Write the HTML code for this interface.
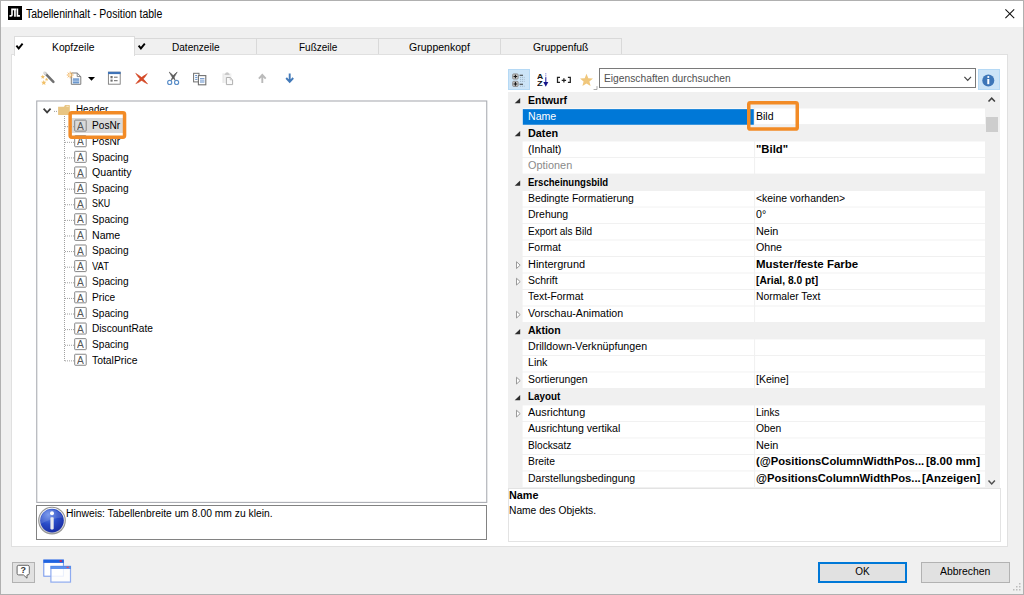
<!DOCTYPE html>
<html lang="de"><head><meta charset="utf-8"><title>Tabelleninhalt - Position table</title>
<style>
html,body{margin:0;padding:0;}
body{width:1024px;height:595px;overflow:hidden;background:#f0f0f0;font-family:"Liberation Sans",sans-serif;font-size:10.5px;position:relative;}
.abs,.t,.ic{position:absolute;}
.t{white-space:pre;line-height:normal;transform-origin:0 0;}
#win{position:absolute;left:0;top:0;width:1022px;height:593px;border:1px solid #b0b0b0;}
#title{left:1px;top:1px;width:1022px;height:26px;background:#fff;}
#logo{left:8px;top:6px;width:14px;height:14px;background:#000;}
#page{left:11px;top:54px;width:995px;height:491px;background:#fff;border:1px solid #e0e0e0;}
.tab{top:38px;height:17px;box-sizing:border-box;background:#f0f0f0;border:1px solid #d9d9d9;border-bottom:none;}
#tabsel{left:14px;top:36px;width:118.5px;height:19px;background:#fff;border:1px solid #dcdcdc;border-bottom:none;}
#treebox{left:37px;top:101px;width:449px;height:401px;background:#fff;}
#hintbox{left:36px;top:505px;width:449px;height:33px;border:1px solid #828282;background:#fff;}
#grid{left:508.2px;top:92px;width:476.8px;height:395.9px;background:#f0f0f0;}
#sbar{left:985px;top:92px;width:15px;height:395.9px;background:#f0f0f0;}
#thumb{left:986.2px;top:117px;width:11.8px;height:14.5px;background:#cdcdcd;}
#desc{left:508.2px;top:487.6px;width:490.8px;height:52.8px;border:1px solid #e3e3e3;background:#fff;}
#search{left:599px;top:68px;width:375px;height:18px;border:1px solid #7a7a7a;background:#fff;}
.tbtn{background:#cce4f7;border:1px solid #b5d9f5;}
.btn{background:#e1e1e1;border:1px solid #b2b2b2;box-sizing:border-box;}

</style></head>
<body>
<div id="win"></div>
<div id="title" class="abs"></div>
<div id="logo" class="abs"></div>
<svg class="ic" style="left:1005.2px;top:8.6px" width="10" height="10" viewBox="0 0 10 10"><path d="M0.4 0.4 L9.2 9.2 M9.2 0.4 L0.4 9.2" stroke="#111" stroke-width="1.05" fill="none"/></svg>

<div class="abs tab" style="left:134px;width:122.5px"></div>
<div class="abs tab" style="left:255.5px;width:123.5px"></div>
<div class="abs tab" style="left:378px;width:123px"></div>
<div class="abs tab" style="left:500px;width:121.5px"></div>
<div id="page" class="abs"></div>
<div id="tabsel" class="abs"></div>

<div id="treebox" class="abs"></div>
<svg class="abs" style="left:0;top:0" width="1024" height="595" viewBox="0 0 1024 595"><rect x="36.75" y="101" width="450" height="401.4" fill="none" stroke="#abadb3" stroke-width="1.1"/></svg>
<div class="abs" style="left:71.5px;top:117.8px;width:51.5px;height:15.4px;background:#d9d9d9"></div>
<svg class="abs" style="left:0;top:0" width="1024" height="595" viewBox="0 0 1024 595"><path d="M64.5 116 V360.86 M65 126.71 H74 M65 142.32 H74 M65 157.93 H74 M65 173.54 H74 M65 189.15 H74 M65 204.76 H74 M65 220.37 H74 M65 235.98 H74 M65 251.59 H74 M65 267.20 H74 M65 282.81 H74 M65 298.42 H74 M65 314.03 H74 M65 329.64 H74 M65 345.25 H74 M65 360.86 H74" stroke="#a0a0a0" stroke-width="1" stroke-dasharray="1 1" fill="none"/><rect x="74.7" y="120.11" width="11.5" height="11" rx="0.6" fill="none" stroke="#858585" stroke-width="1"/><rect x="74.7" y="135.72" width="11.5" height="11" rx="0.6" fill="none" stroke="#858585" stroke-width="1"/><rect x="74.7" y="151.33" width="11.5" height="11" rx="0.6" fill="none" stroke="#858585" stroke-width="1"/><rect x="74.7" y="166.94" width="11.5" height="11" rx="0.6" fill="none" stroke="#858585" stroke-width="1"/><rect x="74.7" y="182.55" width="11.5" height="11" rx="0.6" fill="none" stroke="#858585" stroke-width="1"/><rect x="74.7" y="198.16" width="11.5" height="11" rx="0.6" fill="none" stroke="#858585" stroke-width="1"/><rect x="74.7" y="213.77" width="11.5" height="11" rx="0.6" fill="none" stroke="#858585" stroke-width="1"/><rect x="74.7" y="229.38" width="11.5" height="11" rx="0.6" fill="none" stroke="#858585" stroke-width="1"/><rect x="74.7" y="244.99" width="11.5" height="11" rx="0.6" fill="none" stroke="#858585" stroke-width="1"/><rect x="74.7" y="260.60" width="11.5" height="11" rx="0.6" fill="none" stroke="#858585" stroke-width="1"/><rect x="74.7" y="276.21" width="11.5" height="11" rx="0.6" fill="none" stroke="#858585" stroke-width="1"/><rect x="74.7" y="291.82" width="11.5" height="11" rx="0.6" fill="none" stroke="#858585" stroke-width="1"/><rect x="74.7" y="307.43" width="11.5" height="11" rx="0.6" fill="none" stroke="#858585" stroke-width="1"/><rect x="74.7" y="323.04" width="11.5" height="11" rx="0.6" fill="none" stroke="#858585" stroke-width="1"/><rect x="74.7" y="338.65" width="11.5" height="11" rx="0.6" fill="none" stroke="#858585" stroke-width="1"/><rect x="74.7" y="354.26" width="11.5" height="11" rx="0.6" fill="none" stroke="#858585" stroke-width="1"/></svg>
<div id="hintbox" class="abs"></div>

<div id="grid" class="abs"></div>
<svg class="abs" style="left:0;top:0" width="1024" height="595" viewBox="0 0 1024 595">
<path d="M520.2 98.10 v5.2 h-5.5 z" fill="#2e2e2e"/>
<rect x="522.6" y="108.50" width="462.4" height="15.60" fill="#fff"/>
<rect x="522.8" y="109.15" width="231" height="15.6" fill="#0078d7"/>
<path d="M520.2 131.09 v5.2 h-5.5 z" fill="#2e2e2e"/>
<rect x="522.6" y="141.49" width="462.4" height="15.60" fill="#fff"/>
<rect x="522.6" y="157.98" width="462.4" height="15.60" fill="#fff"/>
<path d="M520.2 180.58 v5.2 h-5.5 z" fill="#2e2e2e"/>
<rect x="522.6" y="190.97" width="462.4" height="15.60" fill="#fff"/>
<rect x="522.6" y="207.47" width="462.4" height="15.60" fill="#fff"/>
<rect x="522.6" y="223.96" width="462.4" height="15.60" fill="#fff"/>
<rect x="522.6" y="240.46" width="462.4" height="15.60" fill="#fff"/>
<rect x="522.6" y="256.95" width="462.4" height="15.60" fill="#fff"/>
<path d="M516.5 261.75 l3.7 3.4 l-3.7 3.4 z" fill="#fff" stroke="#909090" stroke-width="0.9"/>
<rect x="522.6" y="273.45" width="462.4" height="15.59" fill="#fff"/>
<path d="M516.5 278.25 l3.7 3.4 l-3.7 3.4 z" fill="#fff" stroke="#909090" stroke-width="0.9"/>
<rect x="522.6" y="289.94" width="462.4" height="15.60" fill="#fff"/>
<rect x="522.6" y="306.44" width="462.4" height="15.60" fill="#fff"/>
<path d="M516.5 311.24 l3.7 3.4 l-3.7 3.4 z" fill="#fff" stroke="#909090" stroke-width="0.9"/>
<path d="M520.2 329.03 v5.2 h-5.5 z" fill="#2e2e2e"/>
<rect x="522.6" y="339.43" width="462.4" height="15.60" fill="#fff"/>
<rect x="522.6" y="355.92" width="462.4" height="15.60" fill="#fff"/>
<rect x="522.6" y="372.42" width="462.4" height="15.60" fill="#fff"/>
<path d="M516.5 377.22 l3.7 3.4 l-3.7 3.4 z" fill="#fff" stroke="#909090" stroke-width="0.9"/>
<path d="M520.2 395.01 v5.2 h-5.5 z" fill="#2e2e2e"/>
<rect x="522.6" y="405.41" width="462.4" height="15.60" fill="#fff"/>
<path d="M516.5 410.21 l3.7 3.4 l-3.7 3.4 z" fill="#fff" stroke="#909090" stroke-width="0.9"/>
<rect x="522.6" y="421.90" width="462.4" height="15.60" fill="#fff"/>
<rect x="522.6" y="438.40" width="462.4" height="15.60" fill="#fff"/>
<rect x="522.6" y="454.89" width="462.4" height="15.60" fill="#fff"/>
<rect x="522.6" y="471.39" width="462.4" height="15.59" fill="#fff"/>
<rect x="754.1" y="92" width="1" height="395.9" fill="#f0f0f0"/><rect x="985" y="92" width="1" height="395.9" fill="#f8f8f8"/>
</svg>
<div id="sbar" class="abs"></div>
<div id="thumb" class="abs"></div>
<div id="desc" class="abs"></div>
<div id="search" class="abs"></div>
<div class="abs tbtn" style="left:508.2px;top:69px;width:20px;height:19px"></div>
<div class="abs tbtn" style="left:978px;top:69.2px;width:20px;height:18.6px"></div>

<div class="abs btn" style="left:818px;top:562px;width:89.2px;height:20.7px;border:2px solid #0078d7"></div>
<div class="abs btn" style="left:921px;top:562px;width:89px;height:20.7px"></div>
<div class="abs btn" style="left:12px;top:562px;width:22.8px;height:20.7px"></div>

<svg class="abs" style="left:0;top:0" width="1024" height="595" viewBox="0 0 1024 595">
<defs>
<radialGradient id="gi" cx="0.35" cy="0.25" r="0.9"><stop offset="0" stop-color="#6a8eea"/><stop offset="0.45" stop-color="#2a4cc8"/><stop offset="1" stop-color="#14249a"/></radialGradient>
<linearGradient id="gs" x1="0" y1="0" x2="0" y2="1"><stop offset="0" stop-color="#ffffff"/><stop offset="1" stop-color="#c8c8c8"/></linearGradient>
</defs>
<!-- logo JTL -->
<g fill="#fff">
<path d="M11.2 8.5 H16.3 V10.2 H15.8 V16.7 H14.1 V10.2 H12.8 V14.9 Q12.8 16.7 11 16.7 H9.5 V15 H10.6 Q11.2 15 11.2 14.4 Z"/>
<path d="M16.6 8.5 H18.2 V15 H19.9 V16.7 H16.6 Z"/>
</g>
<!-- tab checkmarks -->
<path d="M16.4 45.6 L18.7 48.4 L22.6 43.7" stroke="#000" stroke-width="1.9" fill="none"/>
<path d="M138.6 45.6 L140.9 48.4 L144.8 43.7" stroke="#000" stroke-width="1.9" fill="none"/>

<!-- wand -->
<path d="M45 73.2 L53.4 81.8" stroke="#707070" stroke-width="2.5" stroke-linecap="round"/>
<path d="M44.4 72.6 L45.6 73.8" stroke="#dcdcdc" stroke-width="2.3" stroke-linecap="round"/>
<g fill="#f1c067">
<path d="M42.80 74.60 L43.41 76.06 L44.99 76.19 L43.78 77.22 L44.15 78.76 L42.80 77.94 L41.45 78.76 L41.82 77.22 L40.61 76.19 L42.19 76.06Z"/>
<path d="M46.60 77.70 L47.08 78.84 L48.31 78.94 L47.37 79.75 L47.66 80.96 L46.60 80.31 L45.54 80.96 L45.83 79.75 L44.89 78.94 L46.12 78.84Z"/>
<path d="M43.80 79.90 L44.54 81.68 L46.46 81.83 L45.00 83.09 L45.45 84.97 L43.80 83.96 L42.15 84.97 L42.60 83.09 L41.14 81.83 L43.06 81.68Z"/>
</g>
<!-- new doc -->
<path d="M71.3 73 H77.2 L80.8 76.6 V84.3 H71.3 Z" fill="#fff" stroke="#7c7c7c" stroke-width="1"/>
<path d="M77.2 73 V76.6 H80.8" fill="none" stroke="#7c7c7c" stroke-width="0.9"/>
<rect x="72.8" y="78.4" width="6.4" height="5" fill="#5b8cc8"/>
<path d="M72.8 80.1 H79.2 M72.8 81.7 H79.2" stroke="#d6e3f4" stroke-width="0.7"/>
<g stroke="#f0a848" stroke-width="0.9" stroke-linecap="round"><path d="M70.2 72 V78 M67.2 75 H73.2 M68.1 72.9 L72.3 77.1 M72.3 72.9 L68.1 77.1"/></g>
<circle cx="70.2" cy="75" r="1.2" fill="#fde9c4"/>
<!-- dropdown arrow -->
<path d="M88 77 H95 L91.5 80.8 Z" fill="#000"/>
<!-- properties -->
<rect x="108.4" y="72.2" width="11.8" height="12" fill="#fff" stroke="#7c7c7c" stroke-width="0.9"/>
<rect x="108" y="71.8" width="12.6" height="2.3" fill="#3f73b7"/>
<rect x="110.8" y="76.4" width="1.7" height="1.6" fill="none" stroke="#666" stroke-width="0.6"/>
<rect x="110.8" y="79.9" width="1.7" height="1.6" fill="none" stroke="#666" stroke-width="0.6"/>
<path d="M114 77.2 H117.6 M114 80.7 H117.6" stroke="#555" stroke-width="0.9"/>
<!-- red X -->
<path d="M135.70 73.30 Q139.79 80.69 147.60 83.90 Q142.85 77.26 135.70 73.30Z M147.30 73.60 Q140.36 77.35 135.80 83.80 Q143.41 80.79 147.30 73.60Z" fill="#d44a28" stroke="#d44a28" stroke-width="0.5" stroke-linejoin="round"/>
<!-- scissors -->
<path d="M169.20 72.00 Q171.48 76.98 175.40 80.80 Q174.26 75.02 169.20 72.00Z M177.20 72.00 Q172.14 75.02 171.00 80.80 Q174.92 76.98 177.20 72.00Z" fill="#5c5c5c" stroke="#5c5c5c" stroke-width="0.6" stroke-linejoin="round"/>
<circle cx="169.7" cy="82.4" r="2.05" fill="none" stroke="#5a8ec9" stroke-width="1.15"/>
<circle cx="176.6" cy="82.4" r="2.05" fill="none" stroke="#5a8ec9" stroke-width="1.15"/>
<!-- copy -->
<rect x="193.6" y="73.3" width="5.4" height="8.6" fill="#fff" stroke="#707070" stroke-width="1"/>
<path d="M195.2 75.5 H197 M195.2 77.4 H197.4 M195.2 79.4 H197.4" stroke="#4f83c4" stroke-width="0.9"/>
<rect x="198.4" y="75.6" width="7.4" height="9.2" fill="#fff" stroke="#707070" stroke-width="1.1"/>
<rect x="200" y="78.3" width="4.4" height="0.9" fill="#4676b8"/>
<rect x="200" y="79.8" width="4.4" height="3.1" fill="#9fbbe0"/>
<path d="M200 80.85 H204.4 M200 81.9 H204.4" stroke="#d4e0f1" stroke-width="0.35"/>
<!-- paste disabled -->
<rect x="222.8" y="73.4" width="8.6" height="9.6" fill="#f1f1f1"/>
<path d="M223 73.4 V83" stroke="#e2e2e2" stroke-width="0.8"/>
<path d="M225.2 74.2 Q225.2 72.3 227.1 72.3 Q229 72.3 229 74.2 Z" fill="#c9c9c9"/>
<path d="M224.6 74.3 H229.6" stroke="#c0c0c0" stroke-width="0.9"/>
<path d="M226.4 77.5 H230.2 L232.6 79.9 V84.6 H226.4 Z" fill="#fafafa" stroke="#acacac" stroke-width="0.95"/>
<path d="M230.2 77.5 V79.9 H232.6" fill="none" stroke="#b8b8b8" stroke-width="0.7"/>
<!-- up arrow disabled -->
<path d="M262.3 83 V75.4 M258.9 78.6 L262.3 75 L265.7 78.6" stroke="#bababa" stroke-width="1.9" fill="none"/>
<!-- down arrow -->
<path d="M289.7 73.6 V80.6 M286.2 78 L289.7 81.8 L293.2 78" stroke="#437ab9" stroke-width="1.9" fill="none"/>

<!-- tree chevron -->
<path d="M43.6 108.7 L47.1 112.4 L50.6 108.7" stroke="#3c3c3c" stroke-width="1.7" fill="none"/>
<!-- folder -->
<path d="M58.1 106.7 H64 L65 104.9 H69.3 Q69.8 104.9 69.8 105.4 V114.4 Q69.8 114.9 69.3 114.9 H58.6 Q58.1 114.9 58.1 114.4 Z" fill="#e8c583"/>
<path d="M66.4 105.9 H68.7 V106.7 H66.4Z" fill="#fbf1dc"/>
<path d="M54 111.4 H57" stroke="#a0a0a0" stroke-width="1" stroke-dasharray="1 1"/>

<!-- categorized icon -->
<g stroke="#8c8c8c" stroke-width="0.9" fill="#c2c2c2">
<rect x="512.6" y="73.9" width="5.6" height="5.2" rx="1.2"/><rect x="512.6" y="81.3" width="5.6" height="5.2" rx="1.2"/>
</g>
<path d="M513.6 76.5 H517.2 M515.4 74.7 V78.3 M513.6 83.9 H517.2 M515.4 82.1 V85.7" stroke="#111" stroke-width="1.05"/>
<path d="M519.6 75.3 H523 M519.6 84.2 H523" stroke="#333" stroke-width="1.1"/>
<path d="M520 77.4 H524.6 M520 79.4 H524.6 M520 81.4 H524.6 M520 86.2 H524.6" stroke="#8fa2b4" stroke-width="0.7" stroke-dasharray="1.2 0.8"/>
<!-- [+] -->
<path d="M560 77.4 H557.5 V82.4 H560 M567.9 77.4 H570.3 V82.4 H567.9" stroke="#222" stroke-width="1.25" fill="none"/>
<path d="M561.7 80.3 H566.1 M563.9 78.2 V82.4" stroke="#222" stroke-width="1.25"/>
<!-- AZ arrow -->
<path d="M545.8 73.2 V78" stroke="#5a5ac8" stroke-width="0.8" stroke-dasharray="1.2 0.8"/>
<path d="M545.8 77.6 V83" stroke="#1c1c9c" stroke-width="1.05"/>
<path d="M543.3 82 H548.3 L545.8 86.8 Z" fill="#15158a"/>
<!-- star -->
<path d="M586.5 73.8 L588.3 78.2 L593 78.5 L589.4 81.5 L590.6 86 L586.5 83.5 L582.4 86 L583.6 81.5 L580 78.5 L584.7 78.2 Z" fill="#f0c77c"/>
<path d="M593.6 89.5 H597 V86.1" stroke="#a2a2a2" stroke-width="0.9" fill="none"/>
<!-- search chevron -->
<path d="M964.4 76.9 L967.7 80.4 L971 76.9" stroke="#444" stroke-width="1.2" fill="none"/>
<!-- info small -->
<circle cx="988.3" cy="80.4" r="6" fill="#3d76b8"/>
<circle cx="988.3" cy="77" r="1.1" fill="#fff"/>
<rect x="987.3" y="79" width="2" height="5.2" fill="#fff"/>
<!-- scroll arrows -->
<path d="M988.5 101.6 L991.7 98.2 L994.9 101.6" stroke="#404040" stroke-width="1.5" fill="none"/>
<path d="M988.5 480.6 L991.7 484 L994.9 480.6" stroke="#505050" stroke-width="1.5" fill="none"/>

<!-- hint info icon -->
<circle cx="52" cy="520.6" r="13.3" fill="url(#gs)" stroke="#969696" stroke-width="1.1"/>
<circle cx="52" cy="520.6" r="11.8" fill="url(#gi)"/>
<path d="M40.6 519 A11.6 11.6 0 0 1 63 517.6 Q52 518 40.6 524 Z" fill="#fff" opacity="0.13"/>
<circle cx="52" cy="513.2" r="2" fill="#fff"/>
<rect x="50.4" y="517.2" width="3.3" height="12.2" rx="0.8" fill="#e9e9ee"/>

<!-- help bubble -->
<path d="M18.6 565.3 H27.8 Q29.3 565.3 29.3 566.8 V573.4 Q29.3 574.9 27.8 574.9 H27 V578.2 L23.4 574.9 H18.6 Q17.1 574.9 17.1 573.4 V566.8 Q17.1 565.3 18.6 565.3 Z" fill="#fff" stroke="#555" stroke-width="0.9"/>
<!-- windows icon -->
<rect x="43.8" y="560" width="19.6" height="16.2" fill="#fff" stroke="#6f93ec" stroke-width="1"/>
<rect x="43.4" y="559.7" width="20.4" height="3.2" fill="#1f63e0"/>
<rect x="59.6" y="560.2" width="2.2" height="1.6" fill="#e0204a"/>
<rect x="50.9" y="566.3" width="19.6" height="15.8" fill="#fff" fill-opacity="0.85" stroke="#8fabf0" stroke-width="1.2"/>
<rect x="50.5" y="566" width="20.4" height="3" fill="#4d86ea" fill-opacity="0.9"/>
<rect x="66.6" y="566.6" width="2.2" height="1.5" fill="#e05070"/>
<!-- resize grip -->
<g fill="#bcbcbc">
<rect x="1019" y="583" width="1.5" height="1.5"/><rect x="1016" y="586" width="1.5" height="1.5"/><rect x="1019" y="586" width="1.5" height="1.5"/>
<rect x="1013" y="589" width="1.5" height="1.5"/><rect x="1016" y="589" width="1.5" height="1.5"/><rect x="1019" y="589" width="1.5" height="1.5"/>
</g>
</svg>

<span class="t" style="left:26.08px;top:6.74px;font-size:12px;color:#000;transform:scaleX(0.8727);">Tabelleninhalt - Position table</span>
<span class="t" style="left:52.48px;top:41.95px;font-size:10px;color:#000;transform:scaleX(1.0311);">Kopfzeile</span>
<span class="t" style="left:172.00px;top:41.95px;font-size:10px;color:#000;transform:scaleX(1.0054);">Datenzeile</span>
<span class="t" style="left:299.00px;top:41.95px;font-size:10px;color:#000;transform:scaleX(1.0000);">Fußzeile</span>
<span class="t" style="left:408.97px;top:41.95px;font-size:10px;color:#000;transform:scaleX(1.0522);">Gruppenkopf</span>
<span class="t" style="left:533.23px;top:41.95px;font-size:10px;color:#000;transform:scaleX(1.0381);">Gruppenfuß</span>
<span class="t" style="left:76.00px;top:104.15px;font-size:10px;color:#000;transform:scaleX(0.9832);">Header</span>
<span class="t" style="left:91.70px;top:120.36px;font-size:10px;color:#000;transform:scaleX(1.0126);">PosNr</span>
<span class="t" style="left:77.30px;top:120.79px;font-size:10.3px;color:#555;transform:scaleX(0.9926);">A</span>
<span class="t" style="left:91.70px;top:135.97px;font-size:10px;color:#000;transform:scaleX(1.0126);">PosNr</span>
<span class="t" style="left:77.30px;top:136.40px;font-size:10.3px;color:#555;transform:scaleX(0.9926);">A</span>
<span class="t" style="left:91.70px;top:151.58px;font-size:10px;color:#000;transform:scaleX(1.0126);">Spacing</span>
<span class="t" style="left:77.30px;top:152.01px;font-size:10.3px;color:#555;transform:scaleX(0.9926);">A</span>
<span class="t" style="left:91.70px;top:167.19px;font-size:10px;color:#000;transform:scaleX(1.0604);">Quantity</span>
<span class="t" style="left:77.30px;top:167.62px;font-size:10.3px;color:#555;transform:scaleX(0.9926);">A</span>
<span class="t" style="left:91.70px;top:182.80px;font-size:10px;color:#000;transform:scaleX(1.0126);">Spacing</span>
<span class="t" style="left:77.30px;top:183.23px;font-size:10.3px;color:#555;transform:scaleX(0.9926);">A</span>
<span class="t" style="left:91.70px;top:198.41px;font-size:10px;color:#000;transform:scaleX(0.8850);">SKU</span>
<span class="t" style="left:77.30px;top:198.84px;font-size:10.3px;color:#555;transform:scaleX(0.9926);">A</span>
<span class="t" style="left:91.70px;top:214.02px;font-size:10px;color:#000;transform:scaleX(1.0126);">Spacing</span>
<span class="t" style="left:77.30px;top:214.45px;font-size:10.3px;color:#555;transform:scaleX(0.9926);">A</span>
<span class="t" style="left:91.70px;top:229.63px;font-size:10px;color:#000;transform:scaleX(1.0590);">Name</span>
<span class="t" style="left:77.30px;top:230.06px;font-size:10.3px;color:#555;transform:scaleX(0.9926);">A</span>
<span class="t" style="left:91.70px;top:245.24px;font-size:10px;color:#000;transform:scaleX(1.0126);">Spacing</span>
<span class="t" style="left:77.30px;top:245.67px;font-size:10.3px;color:#555;transform:scaleX(0.9926);">A</span>
<span class="t" style="left:91.70px;top:260.85px;font-size:10px;color:#000;transform:scaleX(0.9408);">VAT</span>
<span class="t" style="left:77.30px;top:261.28px;font-size:10.3px;color:#555;transform:scaleX(0.9926);">A</span>
<span class="t" style="left:91.70px;top:276.46px;font-size:10px;color:#000;transform:scaleX(1.0126);">Spacing</span>
<span class="t" style="left:77.30px;top:276.89px;font-size:10.3px;color:#555;transform:scaleX(0.9926);">A</span>
<span class="t" style="left:91.70px;top:292.07px;font-size:10px;color:#000;transform:scaleX(1.0133);">Price</span>
<span class="t" style="left:77.30px;top:292.50px;font-size:10.3px;color:#555;transform:scaleX(0.9926);">A</span>
<span class="t" style="left:91.70px;top:307.68px;font-size:10px;color:#000;transform:scaleX(1.0126);">Spacing</span>
<span class="t" style="left:77.30px;top:308.11px;font-size:10.3px;color:#555;transform:scaleX(0.9926);">A</span>
<span class="t" style="left:91.70px;top:323.29px;font-size:10px;color:#000;transform:scaleX(1.0142);">DiscountRate</span>
<span class="t" style="left:77.30px;top:323.72px;font-size:10.3px;color:#555;transform:scaleX(0.9926);">A</span>
<span class="t" style="left:91.70px;top:338.90px;font-size:10px;color:#000;transform:scaleX(1.0126);">Spacing</span>
<span class="t" style="left:77.30px;top:339.33px;font-size:10.3px;color:#555;transform:scaleX(0.9926);">A</span>
<span class="t" style="left:91.70px;top:354.51px;font-size:10px;color:#000;transform:scaleX(1.0368);">TotalPrice</span>
<span class="t" style="left:77.30px;top:354.94px;font-size:10.3px;color:#555;transform:scaleX(0.9926);">A</span>
<span class="t" style="left:66.18px;top:507.95px;font-size:10px;color:#000;transform:scaleX(1.0304);">Hinweis: Tabellenbreite um 8.00 mm zu klein.</span>
<span class="t" style="left:527.70px;top:95.28px;font-size:10px;color:#000;font-weight:bold;transform:scaleX(1.0480);">Entwurf</span>
<span class="t" style="left:527.70px;top:110.98px;font-size:10px;color:#fff;transform:scaleX(1.0590);">Name</span>
<span class="t" style="left:756.20px;top:110.98px;font-size:10px;color:#000;transform:scaleX(1.0492);">Bild</span>
<span class="t" style="left:527.70px;top:128.08px;font-size:10px;color:#000;font-weight:bold;transform:scaleX(1.0836);">Daten</span>
<span class="t" style="left:527.70px;top:143.78px;font-size:10px;color:#000;transform:scaleX(1.0748);">(Inhalt)</span>
<span class="t" style="left:756.20px;top:143.78px;font-size:10px;color:#000;font-weight:bold;transform:scaleX(1.1279);">"Bild"</span>
<span class="t" style="left:527.70px;top:160.18px;font-size:10px;color:#8a8a8a;transform:scaleX(1.0887);">Optionen</span>
<span class="t" style="left:527.70px;top:177.28px;font-size:10px;color:#000;font-weight:bold;transform:scaleX(0.9557);">Erscheinungsbild</span>
<span class="t" style="left:527.70px;top:192.98px;font-size:10px;color:#000;transform:scaleX(1.0400);">Bedingte Formatierung</span>
<span class="t" style="left:756.20px;top:192.98px;font-size:10px;color:#000;transform:scaleX(1.0416);">&lt;keine vorhanden&gt;</span>
<span class="t" style="left:527.70px;top:209.38px;font-size:10px;color:#000;transform:scaleX(1.0474);">Drehung</span>
<span class="t" style="left:756.20px;top:209.38px;font-size:10px;color:#000;transform:scaleX(1.0611);">0°</span>
<span class="t" style="left:527.70px;top:225.78px;font-size:10px;color:#000;transform:scaleX(1.0008);">Export als Bild</span>
<span class="t" style="left:756.20px;top:225.78px;font-size:10px;color:#000;transform:scaleX(1.0900);">Nein</span>
<span class="t" style="left:527.70px;top:242.18px;font-size:10px;color:#000;transform:scaleX(1.0409);">Format</span>
<span class="t" style="left:756.20px;top:242.18px;font-size:10px;color:#000;transform:scaleX(1.0646);">Ohne</span>
<span class="t" style="left:527.70px;top:258.58px;font-size:10px;color:#000;transform:scaleX(1.0928);">Hintergrund</span>
<span class="t" style="left:756.20px;top:258.58px;font-size:10px;color:#000;font-weight:bold;transform:scaleX(1.1499);">Muster/feste Farbe</span>
<span class="t" style="left:527.70px;top:274.98px;font-size:10px;color:#000;transform:scaleX(1.0456);">Schrift</span>
<span class="t" style="left:756.20px;top:274.98px;font-size:10px;color:#000;font-weight:bold;transform:scaleX(1.0257);">[Arial, 8.0 pt]</span>
<span class="t" style="left:527.70px;top:291.38px;font-size:10px;color:#000;transform:scaleX(1.0383);">Text-Format</span>
<span class="t" style="left:756.20px;top:291.38px;font-size:10px;color:#000;transform:scaleX(1.0371);">Normaler Text</span>
<span class="t" style="left:527.70px;top:307.78px;font-size:10px;color:#000;transform:scaleX(1.0624);">Vorschau-Animation</span>
<span class="t" style="left:527.70px;top:324.88px;font-size:10px;color:#000;font-weight:bold;transform:scaleX(1.0504);">Aktion</span>
<span class="t" style="left:527.70px;top:340.68px;font-size:10px;color:#000;transform:scaleX(1.0656);">Drilldown-Verknüpfungen</span>
<span class="t" style="left:527.70px;top:357.17px;font-size:10px;color:#000;transform:scaleX(1.0575);">Link</span>
<span class="t" style="left:527.70px;top:373.67px;font-size:10px;color:#000;transform:scaleX(1.0405);">Sortierungen</span>
<span class="t" style="left:756.20px;top:373.67px;font-size:10px;color:#000;transform:scaleX(1.0504);">[Keine]</span>
<span class="t" style="left:527.70px;top:390.86px;font-size:10px;color:#000;font-weight:bold;transform:scaleX(0.9863);">Layout</span>
<span class="t" style="left:527.70px;top:406.66px;font-size:10px;color:#000;transform:scaleX(1.0823);">Ausrichtung</span>
<span class="t" style="left:756.20px;top:406.66px;font-size:10px;color:#000;transform:scaleX(1.0108);">Links</span>
<span class="t" style="left:527.70px;top:423.15px;font-size:10px;color:#000;transform:scaleX(1.0582);">Ausrichtung vertikal</span>
<span class="t" style="left:756.20px;top:423.15px;font-size:10px;color:#000;transform:scaleX(1.0333);">Oben</span>
<span class="t" style="left:527.70px;top:439.65px;font-size:10px;color:#000;transform:scaleX(1.0129);">Blocksatz</span>
<span class="t" style="left:756.20px;top:439.65px;font-size:10px;color:#000;transform:scaleX(1.0900);">Nein</span>
<span class="t" style="left:527.70px;top:456.14px;font-size:10px;color:#000;transform:scaleX(1.0311);">Breite</span>
<span class="t" style="left:756.20px;top:456.14px;font-size:10px;color:#000;font-weight:bold;transform:scaleX(1.1236);">(@PositionsColumnWidthPos...</span>
<span class="t" style="left:926.11px;top:456.14px;font-size:10px;color:#000;font-weight:bold;transform:scaleX(1.1568);">[8.00 mm]</span>
<span class="t" style="left:527.70px;top:472.64px;font-size:10px;color:#000;transform:scaleX(1.0472);">Darstellungsbedingung</span>
<span class="t" style="left:756.20px;top:472.64px;font-size:10px;color:#000;font-weight:bold;transform:scaleX(1.1259);">@PositionsColumnWidthPos...</span>
<span class="t" style="left:921.91px;top:472.64px;font-size:10px;color:#000;font-weight:bold;transform:scaleX(1.1426);">[Anzeigen]</span>
<span class="t" style="left:509.30px;top:489.70px;font-size:10px;color:#000;font-weight:bold;transform:scaleX(1.0815);">Name</span>
<span class="t" style="left:509.30px;top:504.70px;font-size:10px;color:#000;transform:scaleX(1.0231);">Name des Objekts.</span>
<span class="t" style="left:604.29px;top:72.70px;font-size:10px;color:#505050;transform:scaleX(1.0261);">Eigenschaften durchsuchen</span>
<span class="t" style="left:855.25px;top:566.45px;font-size:10px;color:#000;transform:scaleX(1.0000);">OK</span>
<span class="t" style="left:940.30px;top:566.45px;font-size:10px;color:#000;transform:scaleX(1.0417);">Abbrechen</span>
<span class="t" style="left:536.73px;top:72.36px;font-size:8px;color:#111;font-weight:bold;transform:scaleX(1.0667);">A</span>
<span class="t" style="left:536.91px;top:79.16px;font-size:8px;color:#111;font-weight:bold;transform:scaleX(1.1556);">Z</span>
<span class="t" style="left:20.40px;top:565.46px;font-size:9px;color:#333;font-weight:bold;transform:scaleX(1.0000);">?</span>

<svg class="abs" style="left:0;top:0" width="1024" height="595" viewBox="0 0 1024 595"><g fill="none" stroke="#f28b26" stroke-width="3.5">
<rect x="70.15" y="112.75" width="54.4" height="24.4" rx="1.6"/>
<rect x="748.75" y="102.8" width="48.5" height="26.2" rx="1.6"/>
</g></svg>

</body></html>
